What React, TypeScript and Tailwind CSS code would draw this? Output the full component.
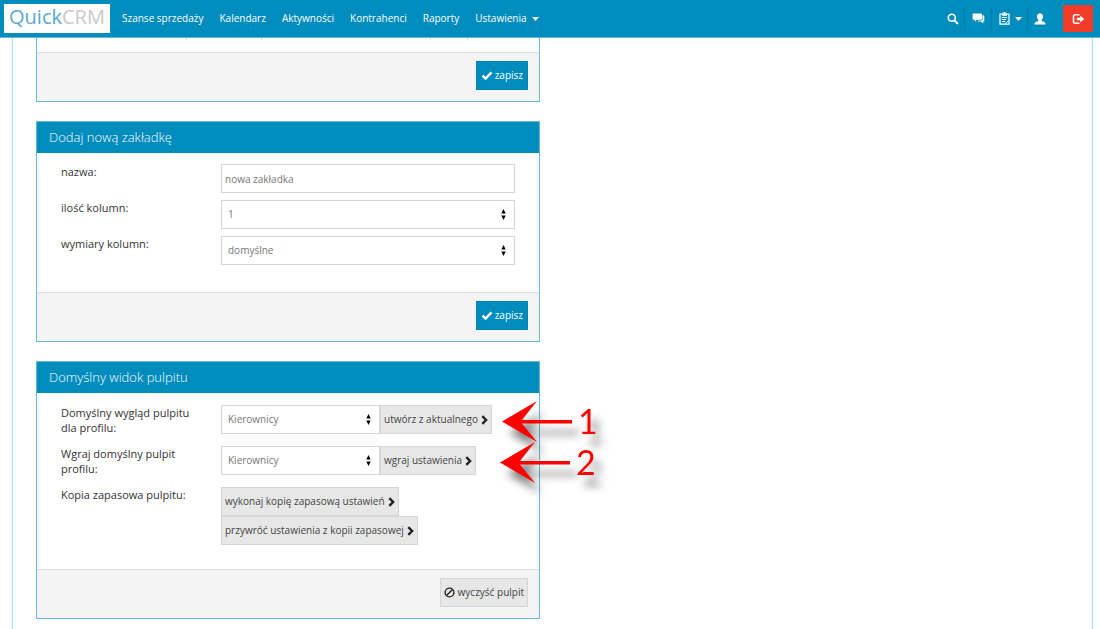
import React from 'react';

const navLinks = ['Szanse sprzedaży', 'Kalendarz', 'Aktywności', 'Kontrahenci', 'Raporty'];

const Caret = () => (
  <svg width="7" height="4" viewBox="0 0 7 4" fill="currentColor" aria-hidden="true">
    <path d="M0 0h7L3.5 4z" />
  </svg>
);

const SearchIcon = () => (
  <svg width="12" height="12" viewBox="0 0 12 12" fill="none" stroke="currentColor" aria-hidden="true">
    <circle cx="4.8" cy="4.8" r="3.5" strokeWidth="1.6" />
    <path d="M7.6 7.6l2.8 2.8" strokeWidth="2" strokeLinecap="round" />
  </svg>
);

const CommentsIcon = () => (
  <svg width="13" height="12" viewBox="0 0 13 12" fill="currentColor" aria-hidden="true">
    <path d="M1.4.4h7.800c.5 0 .8.3.8.8v4.800c0 .5-.3.8-.8.8H4.8L2.8 8.900V6.800H1.400c-.5 0-.8-.3-.8-.8V1.200C.6.700.9.4 1.400.4z" />
    <path d="M10.500 2.200h1c.5 0 .8.3.8.8v4.600c0 .5-.3.8-.8.8h-.3v2.200L8.900 8.400H5.400l1.100-1h3c.6 0 1-.4 1-1z" />
  </svg>
);

const ClipboardIcon = () => (
  <svg width="11" height="13" viewBox="0 0 11 13" fill="none" stroke="currentColor" aria-hidden="true">
    <path d="M1 2h9v10.200H1z" strokeWidth="1.200" />
    <path d="M3 3.800V1.500h1.500V0h2v1.500H8v2.300z" fill="currentColor" stroke="none" />
    <path d="M2.800 5.500h5.400M2.800 7.500h4.400M2.800 9.500h3.400" strokeWidth="1" />
    <path d="M6.500 11.500l3-3" strokeWidth="1" />
  </svg>
);

const UserIcon = () => (
  <svg width="12" height="12" viewBox="0 0 12 12" fill="currentColor" aria-hidden="true">
    <path d="M6 .3c1.900 0 3 1.300 3 3.200 0 1.400-.6 2.700-1.400 3.400v.9c.4.500 3.700 1.200 3.900 2.500v1.200H.5v-1.200C.7 9 4 8.300 4.400 7.800v-.9C3.600 6.200 3 4.900 3 3.500 3 1.600 4.100.3 6 .3z" />
  </svg>
);

const LogoutIcon = () => (
  <svg width="13" height="12" viewBox="0 0 13 12" fill="currentColor" aria-hidden="true">
    <path d="M7.500 1.800H3A1.500 1.500 0 0 0 1.500 3.300v5.400A1.500 1.500 0 0 0 3 10.200h4.500" fill="none" stroke="currentColor" strokeWidth="1.600" />
    <path d="M4.800 4.700h3.400V2.600L12.300 6 8.200 9.400V7.300H4.800z" />
  </svg>
);

const CheckIcon = () => (
  <svg width="12" height="10" viewBox="0 0 12 10" fill="currentColor" aria-hidden="true">
    <path d="M.7 5.400l1.700-1.700 2.200 2L9.700.6l1.700 1.600-6.800 7.100z" />
  </svg>
);

const ChevronIcon = () => (
  <svg width="7" height="10" viewBox="0 0 7 10" fill="none" stroke="#222" strokeWidth="2.400" aria-hidden="true">
    <path d="M1.300 1.200L5.100 5 1.300 8.800" />
  </svg>
);

const BanIcon = () => (
  <svg width="11" height="11" viewBox="0 0 12 12" fill="none" stroke="#222" strokeWidth="1.500" aria-hidden="true">
    <circle cx="6" cy="6" r="4.800" />
    <path d="M2.700 9.300l6.600-6.600" />
  </svg>
);

const Panel: React.FC<{ title?: string; footer: React.ReactNode; children: React.ReactNode }> = ({
  title,
  footer,
  children,
}) => (
  <section className="border border-[#69bad8] bg-white">
    {title && (
      <h2 className="h-[31px] bg-[#008cbd] pl-3 text-[13px] leading-[31px] font-light text-white">{title}</h2>
    )}
    {children}
    <div className="flex h-[49px] justify-end border-t border-[#e2e2e2] bg-[#f4f4f4] pt-2 pr-[11px]">{footer}</div>
  </section>
);

const SaveButton = () => (
  <button
    type="button"
    className="flex h-[29px] items-center gap-0.5 border border-[#0083b2] bg-[#008cbd] px-1 text-[10px] text-white"
  >
    <CheckIcon />
    zapisz
  </button>
);

const GreyButton: React.FC<{ children: React.ReactNode }> = ({ children }) => (
  <button
    type="button"
    className="flex h-[29px] items-center gap-[3px] border border-[#d6d6d6] bg-[#e7e7e7] px-[3px] text-[10px] whitespace-nowrap text-[#444]"
  >
    {children}
  </button>
);

const SelectBox: React.FC<{ id: string; value: string }> = ({ id, value }) => (
  <div className="relative w-full">
    <select
      id={id}
      defaultValue={value}
      className="block h-[29px] w-full appearance-none border border-[#d8d8d8] bg-white pl-1.5 text-[10px] text-[#777]"
    >
      <option>{value}</option>
    </select>
    <svg
      className="pointer-events-none absolute top-2 right-[9px]"
      width="5"
      height="13"
      viewBox="0 0 5 13"
      fill="#000"
      aria-hidden="true"
    >
      <path d="M2.500 1L4.700 5.500H.3zM2.500 12L.3 7.500h4.400z" />
    </svg>
  </div>
);

const Field: React.FC<{ label: string; htmlFor?: string; children: React.ReactNode }> = ({
  label,
  htmlFor,
  children,
}) => (
  <div className="flex items-start">
    <label htmlFor={htmlFor} className="w-40 shrink-0 pr-4 text-[11px] leading-[15px] text-[#333]">
      {label}
    </label>
    <div className="flex flex-1">{children}</div>
  </div>
);

const Arrow: React.FC<{ n: number }> = ({ n }) => (
  <div className="flex items-center gap-1.5 text-[#f00] drop-shadow-[7px_11px_4px_rgba(0,0,0,0.5)]">
    <svg width="70" height="42" viewBox="0 0 70 42" fill="currentColor" aria-hidden="true">
      <path d="M0 20.500L35 0 20 19h50v3.500H20L35 41z" />
    </svg>
    <span className="pb-0.5 font-['Lato',sans-serif] text-[34px] leading-9">{n}</span>
  </div>
);

const Navbar = () => (
  <header className="flex h-[38px] items-center border-b border-[#69bad8] bg-[#008cbd] pr-[7px] pl-1 text-[11px] text-white">
    <a href="#start" className="flex h-[29px] w-[106px] items-center justify-center bg-white pb-1 text-[20px] leading-6">
      <span className="text-[#58a9cf]">Quick</span>
      <span className="text-[#c9c9c9]">CRM</span>
    </a>
    <nav className="ml-3 flex gap-4 text-[10px]">
      {navLinks.map((link) => (
        <a key={link} href="#nav">{link}</a>
      ))}
      <a href="#ustawienia" className="flex items-center gap-[5px]">
        Ustawienia <Caret />
      </a>
    </nav>
    <div className="ml-auto flex items-center">
      <button type="button" aria-label="Szukaj" className="flex h-[22px] w-[18px] items-center border-r border-[#007ea9]">
        <SearchIcon />
      </button>
      <button type="button" aria-label="Wiadomości" className="flex h-[22px] w-[27px] items-center justify-center border-r border-[#007ea9]">
        <CommentsIcon />
      </button>
      <button type="button" aria-label="Zadania" className="flex h-[22px] w-9 items-center justify-end gap-[5px] border-r border-[#007ea9] pr-[5px]">
        <ClipboardIcon />
        <Caret />
      </button>
      <button type="button" aria-label="Konto" className="flex h-[22px] w-6 items-center justify-center">
        <UserIcon />
      </button>
      <button type="button" aria-label="Wyloguj" className="ml-[11px] flex h-[27px] w-[30px] items-center justify-center bg-[#f13c27]">
        <LogoutIcon />
      </button>
    </div>
  </header>
);

const App: React.FC = () => {
  return (
    <div className="flex min-h-screen flex-col bg-white font-['Open_Sans',sans-serif]">
      <Navbar />
      <main className="mr-[7px] ml-3 grid flex-1 grid-cols-2 gap-6 border-x border-[#a5dfef] pr-6 pl-[23px]">
        <div className="flex flex-col gap-[19px]">
          <div className="-mt-px">
            <Panel footer={<SaveButton />}>
              <div className="flex h-3.5 items-start pl-[149px]">
                <div className="mr-[168px] h-0.5 w-[76px] border-x border-[#d8d8d8]" />
                <div className="h-0.5 w-[38px] border-x border-[#d8d8d8]" />
              </div>
            </Panel>
          </div>

          <Panel title="Dodaj nową zakładkę" footer={<SaveButton />}>
            <div className="flex flex-col gap-[7px] px-6 pt-[11px] pb-[27px]">
              <Field label="nazwa:" htmlFor="nazwa">
                <input
                  id="nazwa"
                  type="text"
                  defaultValue="nowa zakładka"
                  className="h-[29px] w-full border border-[#d8d8d8] px-[3px] text-[10px] text-[#777]"
                />
              </Field>
              <Field label="ilość kolumn:" htmlFor="ilosc">
                <SelectBox id="ilosc" value="1" />
              </Field>
              <Field label="wymiary kolumn:" htmlFor="wymiary">
                <SelectBox id="wymiary" value="domyślne" />
              </Field>
            </div>
          </Panel>

          {/* Default view panel with the numbered markers on top */}
          <div className="relative">
            <Panel title="Domyślny widok pulpitu" footer={<GreyButton><BanIcon />wyczyść pulpit</GreyButton>}>
              <div className="flex flex-col gap-[11px] px-6 pt-3 pb-6">
                <Field label="Domyślny wygląd pulpitu dla profilu:" htmlFor="wyglad">
                  <div className="w-[159px]"><SelectBox id="wyglad" value="Kierownicy" /></div>
                  <GreyButton>utwórz z aktualnego<ChevronIcon /></GreyButton>
                </Field>
                <Field label="Wgraj domyślny pulpit profilu:" htmlFor="wgraj">
                  <div className="w-[159px]"><SelectBox id="wgraj" value="Kierownicy" /></div>
                  <GreyButton>wgraj ustawienia<ChevronIcon /></GreyButton>
                </Field>
                <Field label="Kopia zapasowa pulpitu:">
                  <div className="flex flex-col items-start">
                    <GreyButton>wykonaj kopię zapasową ustawień<ChevronIcon /></GreyButton>
                    <GreyButton>przywróć ustawienia z kopii zapasowej<ChevronIcon /></GreyButton>
                  </div>
                </Field>
              </div>
            </Panel>
            <div className="absolute top-10 left-[466px]"><Arrow n={1} /></div>
            <div className="absolute top-[81px] left-[464px]"><Arrow n={2} /></div>
          </div>
        </div>
      </main>
    </div>
  );
};

export default App;
